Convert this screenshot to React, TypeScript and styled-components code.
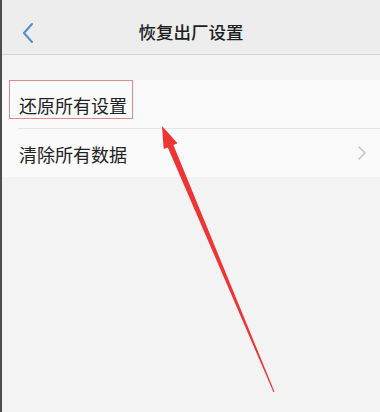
import React from 'react';
import styled, { createGlobalStyle } from 'styled-components';

const GlobalStyle = createGlobalStyle`
  html, body {
    margin: 0;
    padding: 0;
    background: #f3f3f3;
  }
  body {
    font-family: "Noto Sans CJK SC", "Noto Sans", sans-serif;
  }
`;

const Frame = styled.div`
  position: relative;
  width: 380px;
  height: 412px;
  overflow: hidden;
  box-sizing: border-box;
  background: #f3f3f3;
  border-left: 2px solid #4d4d4d;
`;

const Header = styled.header`
  position: relative;
  height: 55px;
  box-sizing: border-box;
  padding-top: 8px;
  display: flex;
  align-items: center;
  justify-content: center;
  background: #ededed;
  border-bottom: 1px solid #d6d6d6;
`;

const BackButton = styled.div`
  position: absolute;
  left: 18px;
  top: 22px;
  width: 16px;
  height: 22px;
  display: flex;
  align-items: center;
  justify-content: center;
`;

const Title = styled.h1`
  margin: 0;
  font-size: 17.5px;
  font-weight: 500;
  color: #1e1e1e;
  letter-spacing: 0;
`;

const Group = styled.div`
  margin-top: 25px;
  background: #fafafa;
`;

const Row = styled.div<{ $divider?: boolean }>`
  position: relative;
  height: 48px;
  box-sizing: border-box;
  display: flex;
  align-items: center;
  padding: 0 14px 0 17px;
  border-bottom: ${({ $divider }) => ($divider ? '1px solid #e4e4e4' : 'none')};
  margin-left: ${({ $divider }) => ($divider ? '0' : '0')};
`;

const Label = styled.span`
  flex: 1;
  font-size: 18px;
  color: #222;
  line-height: 1;
  padding-top: 2px;
`;

const HighlightRow = styled.div`
  height: 49px;
  box-sizing: border-box;
  padding-left: 7px;
  display: flex;
  align-items: flex-start;
  position: relative;

  &::after {
    content: '';
    position: absolute;
    left: 16px;
    right: 0;
    bottom: 0;
    border-bottom: 1px solid #e4e4e4;
  }
`;

const Highlight = styled.span`
  height: 39px;
  box-sizing: border-box;
  padding: 15px 5px 0 9px;
  border: 1px solid #e28a8a;
  font-size: 18px;
  line-height: 1;
  color: #222;
`;

const ArrowLayer = styled.svg`
  position: absolute;
  left: -2px;
  top: 0;
  pointer-events: none;
`;

export default function App() {
  return (
    <>
      <GlobalStyle />
      <Frame>
        <Header>
          <BackButton>
            <svg width="12" height="20" viewBox="0 0 12 20">
              <polyline points="10,1 2,10 10,19" fill="none" stroke="#4f8fd0" strokeWidth="2" strokeLinecap="round" strokeLinejoin="round" />
            </svg>
          </BackButton>
          <Title>恢复出厂设置</Title>
        </Header>
        <Group>
          <HighlightRow>
            <Highlight>还原所有设置</Highlight>
          </HighlightRow>
          <Row>
            <Label>清除所有数据</Label>
            <svg width="8" height="14" viewBox="0 0 8 14">
              <polyline points="1,1 7,7 1,13" fill="none" stroke="#c2c2c2" strokeWidth="1.5" strokeLinecap="round" strokeLinejoin="round" />
            </svg>
          </Row>
        </Group>
        <ArrowLayer width="380" height="412" viewBox="0 0 380 412">
          <polygon
            points="162,126 177.5,143.3 173.4,145 274.5,391.8 273.5,392.2 167.8,147.4 163.7,149.1"
            fill="#ee3434"
          />
        </ArrowLayer>
      </Frame>
    </>
  );
}
